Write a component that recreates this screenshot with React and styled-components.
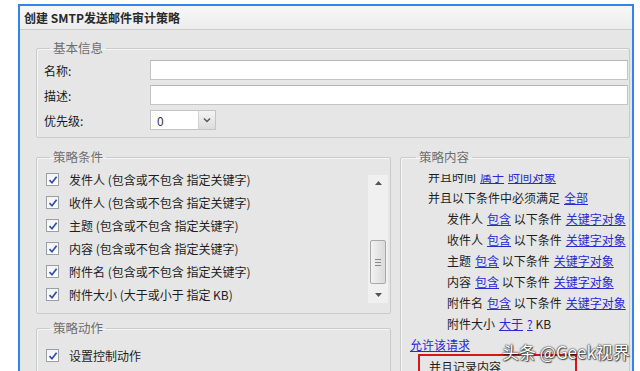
import React from "react";
import styled, { createGlobalStyle } from "styled-components";

const GlobalStyle = createGlobalStyle`
  html, body {
    margin: 0;
    padding: 0;
    background: #ffffff;
    overflow: hidden;
  }
  body {
    font-family: "Noto Sans CJK SC", "Noto Sans", sans-serif;
    font-size: 12px;
    color: #1e1e1e;
  }
`;

const Page = styled.div`
  position: relative;
  width: 640px;
  height: 371px;
  overflow: hidden;
  padding: 4px 6px 0 18px;
  box-sizing: border-box;
`;

const Window = styled.div`
  width: 616px;
  height: 420px;
  box-sizing: border-box;
  border: 2px solid #2f84ee;
  border-bottom: none;
  background: #e6e6e6;
  display: flex;
  flex-direction: column;
`;

const TitleBar = styled.div`
  height: 24px;
  box-sizing: border-box;
  border-bottom: 1px solid #cbcbcb;
  background: linear-gradient(#f7f7f7, #ececec);
  padding-left: 4px;
  display: flex;
  align-items: center;
  font-weight: 700;
  font-size: 12px;
  color: #2a2a2a;
`;

const Body = styled.div`
  padding: 9px 2px 0 16px;
  display: flex;
  flex-direction: column;
  gap: 10px;
`;

const Group = styled.fieldset`
  margin: 0;
  min-width: 0;
  border: 1px solid #cacaca;
  border-radius: 2px;
  box-shadow: inset 1px 1px 0 #f6f6f6;
  padding: ${({ $pad }) => $pad || "3px 0 7px 7px"};
  display: flex;
  flex-direction: column;
`;

const Legend = styled.legend`
  margin-left: 6px;
  padding: 0 3px;
  font-size: 12.5px;
  line-height: 18px;
  color: #6e6e6e;
`;

const FormRow = styled.div`
  display: flex;
  align-items: center;
  height: 20px;
  margin-bottom: ${({ $last }) => ($last ? "0" : "5px")};
`;

const Label = styled.div`
  width: 106px;
  color: #1a1a1a;
`;

const TextInput = styled.div`
  flex: 1;
  height: 20px;
  box-sizing: border-box;
  background: #fff;
  border: 1px solid #c4c4c4;
  border-top-color: #b5b5b5;
  margin-right: 1px;
`;

const Select = styled.div`
  width: 66px;
  height: 20px;
  box-sizing: border-box;
  background: #fff;
  border: 1px solid #c4c4c4;
  display: flex;
  align-items: center;
  padding-left: 6px;
  font-size: 12px;
  color: #333;
`;

const SelectValue = styled.span`
  flex: 1;
`;

const SelectButton = styled.div`
  width: 16px;
  height: 18px;
  background: linear-gradient(#f4f4f4, #dcdcdc);
  border-left: 1px solid #d2d2d2;
  display: flex;
  align-items: center;
  justify-content: center;
`;

const Columns = styled.div`
  display: grid;
  grid-template-columns: 355px 230px;
  gap: 9px;
`;

const LeftCol = styled.div`
  display: flex;
  flex-direction: column;
  gap: 5px;
`;

const ListArea = styled.div`
  display: flex;
  align-items: flex-start;
`;

const CheckList = styled.div`
  flex: 1;
  display: flex;
  flex-direction: column;
  padding-left: 2px;
`;

const CheckRow = styled.div`
  height: 23px;
  display: flex;
  align-items: center;
  gap: 10px;
  color: #1e1e1e;
`;

const Box = styled.span`
  width: 13px;
  height: 13px;
  box-sizing: border-box;
  border: 1px solid #9a9ea6;
  background: linear-gradient(#f3f3f3, #ffffff);
  display: flex;
  align-items: center;
  justify-content: center;
`;

const Scrollbar = styled.div`
  width: 20px;
  height: 128px;
  margin: 7px 2px 0 0;
  background: #f0f0f0;
  display: flex;
  flex-direction: column;
  align-items: center;
  justify-content: space-between;
  padding: 6px 0;
  box-sizing: border-box;
`;

const Thumb = styled.div`
  width: 16px;
  height: 44px;
  margin-top: 46px;
  box-sizing: border-box;
  border: 1px solid #a9a9a9;
  border-radius: 2px;
  background: linear-gradient(90deg, #f2f2f2, #dadada);
  display: flex;
  flex-direction: column;
  align-items: center;
  justify-content: center;
  gap: 2px;
`;

const Grip = styled.span`
  width: 6px;
  height: 1px;
  background: #8a8a8a;
`;

/* scrolled text area: the first line is partly hidden under the top edge */
const Viewport = styled.div`
  height: 200px;
  overflow: hidden;
  margin-top: 8px;
`;

const Lines = styled.div`
  margin-top: -8px;
  display: flex;
  flex-direction: column;
`;

const Line = styled.div`
  height: 21px;
  line-height: 21px;
  padding-left: ${({ $indent }) => $indent || 0}px;
  white-space: nowrap;
  color: #1e1e1e;
`;

const Link = styled.span`
  color: #2a2ad0;
  text-decoration: underline;
  margin-left: 4px;
`;

const AloneLink = styled.span`
  color: #2a2ad0;
  text-decoration: underline;
`;

const RedBox = styled.div`
  margin-left: 8px;
  margin-top: -1px;
  width: 159px;
  box-sizing: border-box;
  border: 2px solid #d9141a;
  padding-left: 9px;
`;

const Watermark = styled.div`
  position: absolute;
  left: 502px;
  top: 341px;
  font-size: 17px;
  line-height: 22px;
  color: #ffffff;
  text-shadow: 0 0 1px #222, 0 0 2px #222, 1px 1px 1px rgba(0, 0, 0, 0.6);
  white-space: nowrap;
`;

const Check = () => (
  <Box>
    <svg width="10" height="10" viewBox="0 0 10 10">
      <path d="M1.5 5.2 L4 7.8 L8.6 1.8" fill="none" stroke="#2d4fa8" strokeWidth="1.7" />
    </svg>
  </Box>
);

const conditions = [
  "发件人 (包含或不包含 指定关键字)",
  "收件人 (包含或不包含 指定关键字)",
  "主题 (包含或不包含 指定关键字)",
  "内容 (包含或不包含 指定关键字)",
  "附件名 (包含或不包含 指定关键字)",
  "附件大小 (大于或小于 指定 KB)",
];

const rules = ["发件人", "收件人", "主题", "内容", "附件名"];

const App = () => (
  <Page>
    <GlobalStyle />
    <Window>
      <TitleBar>创建 SMTP发送邮件审计策略</TitleBar>
      <Body>
        <Group>
          <Legend>基本信息</Legend>
          <FormRow>
            <Label>名称:</Label>
            <TextInput />
          </FormRow>
          <FormRow>
            <Label>描述:</Label>
            <TextInput />
          </FormRow>
          <FormRow $last>
            <Label>优先级:</Label>
            <Select>
              <SelectValue>0</SelectValue>
              <SelectButton>
                <svg width="8" height="6" viewBox="0 0 8 6">
                  <path d="M1 1.5 L4 4.5 L7 1.5" fill="none" stroke="#555" strokeWidth="1.4" />
                </svg>
              </SelectButton>
            </Select>
          </FormRow>
        </Group>

        <Columns>
          <LeftCol>
            <Group $pad="2px 0 7px 7px">
              <Legend>策略条件</Legend>
              <ListArea>
                <CheckList>
                  {conditions.map((c) => (
                    <CheckRow key={c}>
                      <Check />
                      {c}
                    </CheckRow>
                  ))}
                </CheckList>
                <Scrollbar>
                  <svg width="7" height="4" viewBox="0 0 7 4">
                    <path d="M0 4 L3.5 0 L7 4 Z" fill="#555" />
                  </svg>
                  <Thumb>
                    <Grip />
                    <Grip />
                    <Grip />
                  </Thumb>
                  <svg width="7" height="4" viewBox="0 0 7 4">
                    <path d="M0 0 L3.5 4 L7 0 Z" fill="#555" />
                  </svg>
                </Scrollbar>
              </ListArea>
            </Group>
            <Group $pad="7px 0 7px 7px">
              <Legend>策略动作</Legend>
              <CheckList>
                <CheckRow>
                  <Check />
                  设置控制动作
                </CheckRow>
                <CheckRow>
                  <Check />
                  记录日志
                </CheckRow>
              </CheckList>
            </Group>
          </LeftCol>

          <Group $pad="0 0 0 9px">
            <Legend>策略内容</Legend>
            <Viewport>
              <Lines>
                <Line $indent={18}>
                  并且时间<Link>属于</Link>
                  <Link>时间对象</Link>
                </Line>
                <Line $indent={18}>
                  并且以下条件中必须满足<Link>全部</Link>
                </Line>
                {rules.map((r) => (
                  <Line key={r} $indent={37}>
                    {r}
                    <Link>包含</Link> 以下条件<Link>关键字对象</Link>
                  </Line>
                ))}
                <Line $indent={37}>
                  附件大小<Link>大于</Link>
                  <Link>?</Link> KB
                </Line>
                <Line>
                  <AloneLink>允许该请求</AloneLink>
                </Line>
                <RedBox>
                  <Line>并且记录内容</Line>
                </RedBox>
              </Lines>
            </Viewport>
          </Group>
        </Columns>
      </Body>
    </Window>
    <Watermark>头条 @Geek视界</Watermark>
  </Page>
);

export default App;
